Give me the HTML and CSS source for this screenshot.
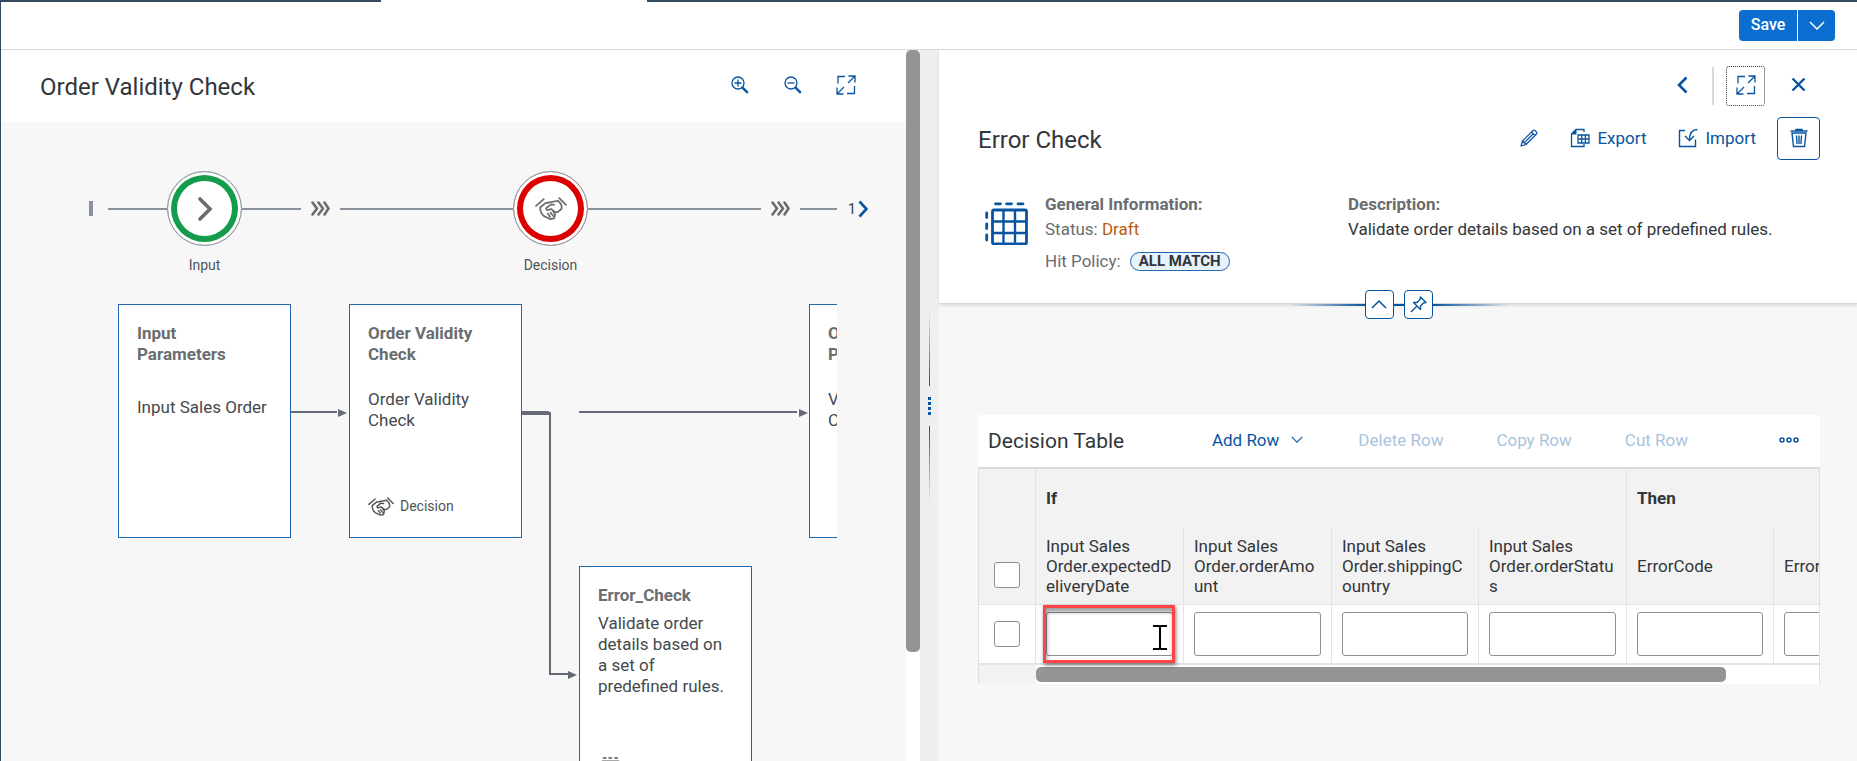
FILE: index.html
```html
<!DOCTYPE html>
<html lang="en">
<head>
<meta charset="utf-8">
<title>Order Validity Check</title>
<link rel="stylesheet" href="styles.css">
</head>
<body>
<svg class="sprite" aria-hidden="true">
  <symbol id="fullscreen" viewBox="0 0 20 20"><path d="M2 8.500V1.500H9M11 18.500H18.500V11M12 8L18.500 1.500M12.500 1H19V7.500M8 12L1.500 18.500M1 12.500V19H7.500" fill="none" stroke="currentColor" stroke-width="1.300"/></symbol>
  <symbol id="hands" viewBox="0 0 31 22"><g fill="none" stroke="currentColor" stroke-width="1.700" stroke-linecap="round" stroke-linejoin="round"><path d="M1 8.500L8.500 2M23.500 1L30 7.500M10.500 5.500L5 10C5 15 7 18 11 19.500L15 21.300L18.500 20.500L19.500 16.500M10.500 5.500C13 6 14.500 4.500 17 4.500L22 3.500C25.500 6 26.500 8.500 25.500 11.500L22 14.500H19.500L15.500 11.500L12.500 12.500C11 12.500 10.500 11.500 11 10.500L15.500 7L18.500 7.500M17.500 13.500L19.500 16.500M15 15L17.500 18M12.500 16L14.500 19"/></g></symbol>
  <symbol id="chevrons" viewBox="0 0 19 15"><path d="M1.500 1.500L6 7.500L1.500 13.500M7.500 1.500L12 7.500L7.500 13.500M13.500 1.500L17.500 7.500L13.500 13.500" fill="none" stroke="currentColor" stroke-width="2.600" stroke-linecap="round" stroke-linejoin="round"/></symbol>
  <symbol id="grid" viewBox="0 0 43 43"><g fill="none" stroke="currentColor"><rect x="7.500" y="8" width="34" height="34" rx="1.500" stroke-width="2.800"/><path d="M18.500 8V42M30 8V42M7 19.500H42M7 31H42" stroke-width="2.400"/><path d="M10.500 1.800H15.500M21.500 1.800H26.500M33 1.800H38M1.700 11V15.500M1.700 22V26.500M1.700 33V38" stroke-width="2.800" stroke-linecap="round"/></g></symbol>
  <symbol id="down" viewBox="0 0 16 9"><path d="M1 1L8 8L15 1" fill="none" stroke="currentColor" stroke-width="1.500"/></symbol>
</svg>

<header class="shell">
  <div class="tabs"><span class="tab-bar tab-before"></span><span class="tab-gap"></span><span class="tab-bar tab-after"></span></div>
  <div class="actions">
    <button class="save" type="button">Save</button><button class="save save-menu" type="button" aria-label="More save options"><svg width="16" height="9"><use href="#down"/></svg></button>
  </div>
</header>

<main class="split">
  <section class="flow">
    <div class="flow-head">
      <h1 class="title">Order Validity Check</h1>
      <div class="zoom-tools">
        <button class="icon-btn" type="button" aria-label="Zoom in"><svg width="18" height="18" viewBox="0 0 18 18"><g fill="none" stroke="currentColor"><circle cx="7" cy="7" r="6" stroke-width="1.300"/><path d="M3.500 7H10.500M7 3.500V10.500" stroke-width="1.300"/><path d="M11.300 11.300L16.800 16.800" stroke-width="2.400"/></g></svg></button>
        <button class="icon-btn" type="button" aria-label="Zoom out"><svg width="18" height="18" viewBox="0 0 18 18"><g fill="none" stroke="currentColor"><circle cx="7" cy="7" r="6" stroke-width="1.300"/><path d="M3.500 7H10.500" stroke-width="1.300"/><path d="M11.300 11.300L16.800 16.800" stroke-width="2.400"/></g></svg></button>
        <button class="icon-btn" type="button" aria-label="Full screen"><svg width="20" height="20"><use href="#fullscreen"/></svg></button>
      </div>
    </div>

    <div class="lanes">
      <span class="start"></span>
      <span class="line line-edge"></span>
      <div class="lane"><span class="ring ring-ok"><svg width="16" height="26" viewBox="0 0 16 26"><path d="M3 3L13 13L3 23" fill="none" stroke="currentColor" stroke-width="3.600" stroke-linecap="round"/></svg></span><span class="lane-label">Input</span></div>
      <span class="line line-edge"></span>
      <svg class="arrows" width="19" height="15"><use href="#chevrons"/></svg>
      <span class="line line-long"></span>
      <div class="lane"><span class="ring ring-error"><svg width="32" height="23"><use href="#hands"/></svg></span><span class="lane-label">Decision</span></div>
      <span class="line line-long"></span>
      <svg class="arrows" width="19" height="15"><use href="#chevrons"/></svg>
      <span class="line line-last"></span>
      <button class="more" type="button">1<svg width="10" height="18" viewBox="0 0 10 18"><path d="M1.500 1.500L8.500 9L1.500 16.500" fill="none" stroke="#0854a0" stroke-width="2.600"/></svg></button>
    </div>

    <div class="canvas">
      <svg class="links" width="836" height="500" viewBox="0 0 836 500" aria-hidden="true">
        <g fill="none" stroke="#646b77" stroke-width="2"><path d="M290 112H336M578 112H796"/><path d="M520 113H548" stroke-width="4"/><path d="M549 112V374H567"/></g>
        <path d="M337 109L346 113L337 117ZM798 109L807 113L798 117ZM567 371L576 375L567 379Z" fill="#646b77"/>
      </svg>
      <article class="node node-input"><h2>Input<br>Parameters</h2><p>Input Sales Order</p></article>
      <article class="node node-order"><h2>Order Validity Check</h2><p>Order Validity Check</p><footer><svg width="26" height="19"><use href="#hands"/></svg>Decision</footer></article>
      <article class="node node-output"><h2>Output Parameters</h2><p>Validity<br>Check</p></article>
      <article class="node node-error"><h2>Error_Check</h2><p>Validate order details based on a set of predefined rules.</p><footer><svg width="22" height="22"><use href="#grid"/></svg></footer></article>
    </div>
  </section>

  <div class="scroll"><span class="scroll-thumb"></span></div>
  <div class="splitter"><span class="grip grip-up"></span><span class="dots"></span><span class="grip grip-down"></span></div>

  <section class="detail">
    <div class="detail-head">
      <div class="nav">
        <button class="icon-btn" type="button" aria-label="Back"><svg width="11" height="18" viewBox="0 0 11 18"><path d="M9.500 1.500L2 9L9.500 16.500" fill="none" stroke="currentColor" stroke-width="2.600"/></svg></button>
        <span class="sep"></span>
        <button class="icon-btn focused" type="button" aria-label="Full screen"><svg width="20" height="20"><use href="#fullscreen"/></svg></button>
        <button class="icon-btn" type="button" aria-label="Close"><svg width="15" height="15" viewBox="0 0 15 15"><path d="M1.500 1.500L13.500 13.500M13.500 1.500L1.500 13.500" fill="none" stroke="currentColor" stroke-width="2.400"/></svg></button>
      </div>
      <div class="title-row">
        <h2 class="title">Error Check</h2>
        <div class="tools">
          <button class="link-btn" type="button" aria-label="Edit"><svg width="18" height="18" viewBox="0 0 18 18"><path d="M1 17L2.500 12L13 1.500Q14 .7 15 1.500L16.500 3Q17.300 4 16.500 5L6 15.500ZM11.500 3L15 6.500M2.500 12L6 15.500M4.500 13.500L13.500 4.500" fill="none" stroke="currentColor" stroke-width="1.200" stroke-linejoin="round"/></svg></button>
          <button class="link-btn" type="button"><svg width="20" height="20" viewBox="0 0 20 20"><path d="M14 4V1.500H6L1.500 6V18.500H14V16M8 7H19V15H8ZM8 11H19M11.700 7V15M15.400 7V15" fill="none" stroke="currentColor" stroke-width="1.300"/><path d="M6.500 1V6.500H1Z" fill="currentColor"/></svg>Export</button>
          <button class="link-btn" type="button"><svg width="20" height="20" viewBox="0 0 20 20"><path d="M7 2.500H1.500V18.500H17.500V11.500M19.500 1.500C14 1.500 11.500 5 11.500 12M7 8L11.500 12.500L16 8" fill="none" stroke="currentColor" stroke-width="1.400"/></svg>Import</button>
          <button class="link-btn trash" type="button" aria-label="Delete"><svg width="18" height="20" viewBox="0 0 18 20"><path d="M.5 3H17.500M6 2.500V1.500H12V2.500M2 5H16L14.500 18.500H3.500ZM6.500 7.500L7 16M9 7.500V16M11.500 7.500L11 16" fill="none" stroke="currentColor" stroke-width="1.400"/></svg></button>
        </div>
      </div>
      <div class="facts">
        <svg class="fact-icon" width="43" height="43"><use href="#grid"/></svg>
        <div class="fact">
          <h3>General Information:</h3>
          <p class="muted">Status: <span class="draft">Draft</span></p>
          <p class="muted policy">Hit Policy: <span class="tag">ALL MATCH</span></p>
        </div>
        <div class="fact fact-desc"><h3>Description:</h3><p>Validate order details based on a set of predefined rules.</p></div>
      </div>
      <div class="anchor">
        <span class="ray ray-left"></span>
        <button class="anchor-btn" type="button" aria-label="Collapse header"><svg class="flip" width="16" height="9"><use href="#down"/></svg></button>
        <span class="ray"></span>
        <button class="anchor-btn" type="button" aria-label="Pin header"><svg width="17" height="17" viewBox="0 0 17 17"><path d="M10.500 1L16 6.500L13.500 7L10.500 10L10.500 13.500L3.500 6.500L7 6.500L10 3.500ZM7 10L1 16" fill="none" stroke="currentColor" stroke-width="1.400" stroke-linejoin="round"/></svg></button>
        <span class="ray ray-right"></span>
      </div>
    </div>

    <div class="decision">
      <div class="table-bar">
        <h3 class="table-title">Decision Table</h3>
        <div class="row-tools">
          <button class="row-btn add" type="button">Add Row <svg width="12" height="7"><use href="#down"/></svg></button>
          <button class="row-btn" type="button" disabled>Delete Row</button>
          <button class="row-btn" type="button" disabled>Copy Row</button>
          <button class="row-btn" type="button" disabled>Cut Row</button>
          <button class="row-btn overflow" type="button" aria-label="More actions"><svg width="20" height="6" viewBox="0 0 20 6"><g fill="none" stroke="currentColor" stroke-width="1.500"><circle cx="3" cy="3" r="2"/><circle cx="10" cy="3" r="2"/><circle cx="17" cy="3" r="2"/></g></svg></button>
        </div>
      </div>
      <div class="table-clip">
        <table class="rules">
          <colgroup><col class="c-check"><col class="c-rule"><col class="c-rule"><col class="c-slim"><col class="c-rule"><col class="c-slim"><col class="c-rule"></colgroup>
          <thead>
            <tr class="groups"><th rowspan="2" class="pick"><input type="checkbox" class="check" aria-label="Select all rows"></th><th colspan="4" scope="colgroup">If</th><th colspan="2" scope="colgroup">Then</th></tr>
            <tr class="names"><th scope="col">Input Sales Order.expectedD<wbr>eliveryDate</th><th scope="col">Input Sales Order.orderAmo<wbr>unt</th><th scope="col">Input Sales Order.shippingC<wbr>ountry</th><th scope="col">Input Sales Order.orderStatu<wbr>s</th><th scope="col">ErrorCode</th><th scope="col">ErrorMessage</th></tr>
          </thead>
          <tbody>
            <tr><td class="pick"><input type="checkbox" class="check" aria-label="Select row 1"></td>
              <td class="marked"><input class="field" type="text" aria-label="Expected delivery date"><span class="highlight"></span><svg class="ibeam" width="14" height="25" viewBox="0 0 14 25"><path d="M0 1H6L7 2L8 1H14M0 24H6L7 23L8 24H14M7 1V24" fill="none" stroke="#000" stroke-width="2"/></svg></td>
              <td><input class="field" type="text" aria-label="Order amount"></td><td><input class="field" type="text" aria-label="Shipping country"></td><td><input class="field" type="text" aria-label="Order status"></td><td><input class="field" type="text" aria-label="Error code"></td><td><input class="field" type="text" aria-label="Error message"></td></tr>
          </tbody>
        </table>
        <div class="hscroll"><span class="hscroll-corner"></span><span class="hscroll-track"><span class="hscroll-thumb"></span></span></div>
      </div>
    </div>
  </section>
</main>
</body>
</html>
```
FILE: styles.css
```css
* { box-sizing: border-box; }
body {
  margin: 0;
  height: 100vh;
  display: flex;
  flex-direction: column;
  overflow: hidden;
  border-left: 1px solid #354a5f;
  background: #fff;
  color: #32363a;
  font: 17px/20px Roboto, "Noto Sans", sans-serif;
}
h1, h2, h3, p { margin: 0; font-weight: 400; }
button {
  border: 0;
  margin: 0;
  padding: 0;
  background: none;
  color: #0854a0;
  font: inherit;
  display: flex;
  align-items: center;
  justify-content: center;
}
svg { flex: none; display: block; }
.sprite { position: absolute; width: 0; height: 0; }
.title { padding-top: 2px; font-size: 24px; line-height: 32px; }

/* Shell bar */
.shell { border-bottom: 1px solid #d9d9d9; }
.tabs { display: flex; height: 2px; }
.tab-bar { background: #354a5f; }
.tab-before { flex: 380; }
.tab-gap { flex: 266; }
.tab-after { flex: 1210; }
.actions { display: flex; justify-content: flex-end; gap: 1px; padding: 8px 22px; }
.save {
  width: 58px;
  height: 31px;
  padding-bottom: 2px;
  background: #0a6ed1;
  color: #fff;
  font-size: 16px;
  font-weight: 500;
  border-radius: 4px 0 0 4px;
}
.save-menu { width: 37px; padding-bottom: 0; border-radius: 0 4px 4px 0; }

.split { flex: 1; min-height: 0; display: grid; grid-template-columns: 905fr 14px 19px 918fr; }

/* Process flow */
.flow { min-width: 0; overflow: hidden; background: #f7f7f7; }
.flow-head {
  height: 72px;
  padding: 0 42px 0 39px;
  display: flex;
  align-items: center;
  justify-content: space-between;
  background: #fff;
}
.zoom-tools { display: flex; gap: 17px; }
.zoom-tools .icon-btn { padding-bottom: 3px; }
.icon-btn { width: 36px; height: 40px; }
.lanes { display: flex; align-items: center; height: 75px; margin: 49px 37px 0 88px; }
.start { width: 4px; height: 15px; margin-right: 15px; background: #89919a; }
.line { height: 2px; background: #89919a; }
.line-edge { width: 59px; }
.line-long { width: 173px; }
.line-last { width: 37px; }
.arrows { margin: 0 10px; color: #6a6d70; }
.lane { position: relative; }
.ring {
  width: 75px;
  height: 75px;
  display: flex;
  align-items: center;
  justify-content: center;
  border-radius: 50%;
  border: 1px solid #89919a;
  background: #fff;
  color: #6a6d70;
}
.ring-ok { box-shadow: inset 0 0 0 3px #fff, inset 0 0 0 9px #149b4b; }
.ring-error { box-shadow: inset 0 0 0 3px #fff, inset 0 0 0 9px #dc0000; }
.lane-label { position: absolute; top: 86px; left: 0; right: 0; text-align: center; font-size: 14px; line-height: 16px; color: #515559; }
.more { margin-left: 11px; gap: 2px; font-size: 14px; color: #32363a; }

.canvas { position: relative; height: 560px; margin: 54px 69px 0 0; overflow: hidden; }
.links { position: absolute; left: 0; top: 0; }
.node {
  position: absolute;
  width: 173px;
  height: 234px;
  padding: 18px 18px 20px;
  border: 1px solid #1f68b0;
  background: #fff;
  line-height: 21px;
  display: flex;
  flex-direction: column;
}
.node h2 { color: #6a6d70; font-size: 17px; line-height: 21px; font-weight: 700; }
.node p { color: #45494d; }
.node footer { display: flex; align-items: center; gap: 6px; margin-top: auto; font-size: 14px; color: #515559; }
.node-input { left: 117px; top: 4px; }
.node-input p { margin-top: 32px; white-space: nowrap; }
.node-order { left: 348px; top: 4px; }
.node-order p, .node-output p { margin-top: 24px; }
.node-output { left: 808px; top: 4px; }
.node-error { left: 578px; top: 266px; }
.node-error p { margin-top: 7px; }

/* Scroll bar and splitter */
.scroll { background: #fff; }
.scroll-thumb { display: block; height: 602px; border-radius: 5px; background: #949494; }
.splitter { background: #edeff0; display: flex; flex-direction: column; align-items: center; justify-content: center; gap: 11px; }
.grip { width: 1px; height: 76px; background: linear-gradient(to top, #0854a0, transparent); }
.grip-down { background: linear-gradient(#0854a0, transparent); }
.dots { width: 3px; height: 18px; background: repeating-linear-gradient(#0854a0 0 3px, transparent 3px 5px); }

/* Detail panel */
.detail { min-width: 0; background: #f7f7f7; }
.detail-head { position: relative; height: 254px; padding: 16px 37px 0 39px; background: #fff; border-bottom: 1px solid #d9d9d9; box-shadow: 0 2px 3px #0000001a; }
.nav { display: flex; align-items: center; justify-content: flex-end; height: 40px; gap: 12px; }
.sep { width: 2px; height: 38px; background: #d9d9d9; }
.nav .focused { width: 39px; height: 40px; border: 1px dotted #32363a; border-radius: 3px; }
.nav .icon-btn { padding-bottom: 3px; }
.nav .icon-btn:last-child { width: 43px; }
.title-row { display: flex; align-items: center; justify-content: space-between; height: 43px; margin-top: 11px; }
.tools { display: flex; align-items: center; }
.link-btn { gap: 7px; height: 43px; padding-bottom: 2px; margin-right: 32px; }
.link-btn:nth-last-child(2) { margin-right: 21px; }
.trash { width: 43px; margin-right: 0; border: 1px solid #0854a0; border-radius: 4px; }
.facts { display: flex; margin-top: 32px; padding-left: 7px; }
.fact-icon { margin-top: 10px; color: #0854a0; }
.fact { width: 303px; margin-left: 17px; }
.fact-desc { width: auto; margin-left: 0; }
.fact h3 { font-size: 17px; line-height: 24px; font-weight: 700; color: #6a6d70; }
.fact p { line-height: 26px; }
.fact .muted { color: #6a6d70; }
.fact .draft { color: #bb5c0e; }
.fact .policy { display: flex; align-items: center; gap: 9px; margin-top: 6px; }
.tag { padding: 0 8px; border: 1px solid #1f68b0; border-radius: 10px; background: #e8f2fa; color: #32363a; font-size: 15px; line-height: 17px; font-weight: 700; }
.anchor { position: absolute; left: 1px; right: 0; bottom: -16px; display: flex; align-items: center; justify-content: center; }
.anchor-btn { width: 29px; height: 29px; background: #fff; border: 1px solid #0854a0; border-radius: 4px; }
.flip { transform: rotate(180deg); }
.ray { width: 10px; height: 2px; background: #0854a0; }
.ray-left { width: 76px; background: linear-gradient(to left, #0854a0, transparent); }
.ray-right { width: 76px; background: linear-gradient(to right, #0854a0, transparent); }

/* Decision table */
.decision { margin: 111px 37px 0 39px; }
.table-bar { display: flex; align-items: center; justify-content: space-between; height: 52px; padding: 0 21px 0 10px; background: #fff; }
.table-title { font-size: 21px; line-height: 28px; }
.row-tools { display: flex; align-items: center; gap: 53px; padding-bottom: 3px; }
.add { gap: 12px; margin-right: 2px; }
.row-btn:disabled { color: #a9c4de; }
.overflow { margin-left: 38px; }
.table-clip { overflow: hidden; border: 1px solid #e0e0e0; border-top: 2px solid #d9d9d9; border-bottom: 0; background: #fff; }
.rules { table-layout: fixed; width: 942px; border-collapse: separate; border-spacing: 0; }
.c-check { width: 57px; }
.c-rule { width: 148px; }
.c-slim { width: 147px; }
.rules th { padding: 0 10px; text-align: left; font-weight: 400; background: #f2f2f2; border-right: 1px solid #e3e3e3; color: #32363a; }
.rules .groups th { height: 58px; font-weight: 700; }
.rules .names th { height: 78px; border-bottom: 1px solid #e3e3e3; }
.rules td { height: 60px; padding: 0 10px; border-right: 1px solid #e3e3e3; border-bottom: 2px solid #e3e3e3; }
.rules .pick { padding: 0 0 0 15px; border-bottom: 1px solid #e3e3e3; }
.rules td.pick { border-bottom-width: 2px; }
.rules th.pick { vertical-align: bottom; padding-bottom: 16px; }
.check { appearance: none; display: block; width: 26px; height: 26px; margin: 0; border: 1px solid #89919a; border-radius: 3px; background: #fff; }
.field { display: block; width: 100%; height: 44px; border: 1px solid #89919a; border-radius: 3px; background: #fff; font: inherit; }
.marked { position: relative; }
.highlight { position: absolute; inset: 0 8px 0 7px; border: 3px solid #ff4545; box-shadow: 1px 2px 4px #00000080, inset 1px 4px 4px #00000060; pointer-events: none; }
.ibeam { position: absolute; right: 16px; top: 20px; }
.hscroll { display: flex; height: 19px; }
.hscroll-corner { width: 57px; background: #f2f2f2; }
.hscroll-track { flex: 1; padding: 2px 93px 2px 0; }
.hscroll-thumb { display: block; height: 15px; border-radius: 5px; background: #949494; }
```
